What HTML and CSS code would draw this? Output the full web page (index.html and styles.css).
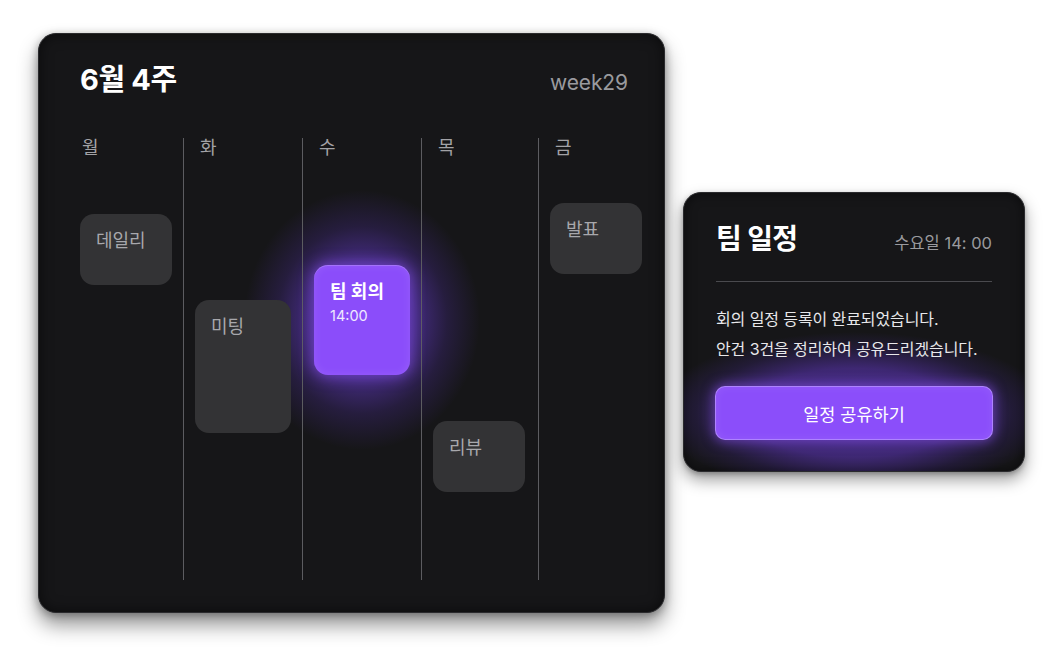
FILE: index.html
```html
<!DOCTYPE html>
<html lang="ko">
<head>
<meta charset="utf-8">
<title>주간 일정</title>
<link rel="stylesheet" href="styles.css">
</head>
<body>
<div class="stage">
  <section class="week-card">
    <header class="week-head">
      <h1 class="week-title">6월 4주</h1>
      <span class="week-no">week29</span>
    </header>
    <div class="days">
      <div class="day day-first">
        <span class="day-label">월</span>
        <div class="event ev-daily">데일리</div>
      </div>
      <div class="day">
        <span class="day-label">화</span>
        <div class="event ev-meeting">미팅</div>
      </div>
      <div class="day">
        <span class="day-label">수</span>
        <div class="event event-active ev-team">
          <span class="ev-name">팀 회의</span>
          <span class="ev-time">14:00</span>
        </div>
      </div>
      <div class="day">
        <span class="day-label">목</span>
        <div class="event ev-review">리뷰</div>
      </div>
      <div class="day">
        <span class="day-label">금</span>
        <div class="event ev-talk">발표</div>
      </div>
    </div>
  </section>

  <aside class="notice">
    <div class="notice-head">
      <h2 class="notice-title">팀 일정</h2>
      <span class="notice-when">수요일 14: 00</span>
    </div>
    <hr class="notice-rule">
    <p class="notice-text">회의 일정 등록이 완료되었습니다.<br>안건 3건을 정리하여 공유드리겠습니다.</p>
    <button class="notice-btn" type="button">일정 공유하기</button>
  </aside>
</div>
</body>
</html>
```

FILE: styles.css
```css
* { box-sizing: border-box; }

html, body {
  margin: 0;
  background: #ffffff;
}

body {
  font-family: "Inter", "Noto Sans CJK KR", sans-serif;
  color: #ffffff;
  min-height: 648px;
}

.stage {
  display: flex;
  align-items: flex-start;
  padding: 33px 0 40px 38px;
}

/* ---------- week card ---------- */
.week-card {
  position: relative;
  z-index: 0;
  width: 627px;
  height: 580px;
  background: #161618;
  border: 1px solid #2a2a2d;
  border-radius: 18px;
  box-shadow:
    inset 0 0 14px rgba(0, 0, 0, 0.55),
    0 12px 20px rgba(0, 0, 0, 0.42),
    0 2px 8px rgba(0, 0, 0, 0.3);
  padding: 26px 36px 0 41px;
  display: flex;
  flex-direction: column;
}

.week-head {
  display: flex;
  justify-content: space-between;
  align-items: baseline;
}

.week-title {
  margin: 0;
  font-size: 29px;
  font-weight: 700;
  letter-spacing: -0.4px;
  line-height: 40px;
}

.week-no {
  font-size: 21px;
  color: #9a9a9e;
  letter-spacing: -0.1px;
}

.days {
  margin-top: 38px;
  margin-right: -18px;
  display: grid;
  grid-template-columns: 103px 119px 119px 117px 1fr;
  height: 442px;
}

.day {
  display: flex;
  flex-direction: column;
  align-items: flex-start;
  border-left: 1px solid #5c5c60;
  padding-left: 11px;
}

.day-first {
  border-left: none;
  padding-left: 0;
}

.day-label {
  font-size: 18px;
  line-height: 20px;
  color: #a2a2a6;
  padding-left: 5px;
}

.day-first .day-label { padding-left: 2px; }

.event {
  width: 92px;
  height: 71px;
  border-radius: 14px;
  background: #333335;
  color: #a8a8ac;
  font-size: 18px;
  line-height: 24px;
  padding: 15px 16px 0;
}

.ev-daily  { margin-top: 56px; }
.ev-meeting { margin-top: 142px; width: 96px; height: 133px; }
.ev-team   { margin-top: 107px; width: 96px; height: 110px; }
.ev-review { margin-top: 263px; }
.ev-talk   { margin-top: 45px; }

.event-active {
  position: relative;
  background: #8b4dfa;
  color: #ffffff;
  display: flex;
  flex-direction: column;
  gap: 3px;
  box-shadow:
    inset 0 1px 0 rgba(255, 255, 255, 0.18),
    inset 0 0 10px rgba(255, 255, 255, 0.1),
    0 0 14px 2px rgba(145, 85, 255, 0.55);
}

/* soft purple halo behind the highlighted event */
.event-active::before {
  content: "";
  position: absolute;
  left: -70px;
  right: -70px;
  top: -75px;
  bottom: -75px;
  border-radius: 50%;
  background: radial-gradient(closest-side,
    rgba(130, 75, 255, 0.62) 0%,
    rgba(120, 68, 245, 0.45) 45%,
    rgba(110, 60, 235, 0.18) 72%,
    rgba(100, 55, 225, 0) 100%);
  z-index: -1;
}

.ev-name {
  font-weight: 700;
  font-size: 18px;
  line-height: 24px;
}

.ev-time {
  font-size: 14.5px;
  line-height: 18px;
  color: #efe8ff;
}

/* ---------- notice card ---------- */
.notice {
  position: relative;
  z-index: 0;
  overflow: hidden;
  margin: 159px 0 0 18px;
  width: 342px;
  height: 280px;
  background: #161618;
  border: 1px solid #2a2a2d;
  border-radius: 18px;
  box-shadow:
    inset 0 0 12px rgba(0, 0, 0, 0.55),
    0 8px 16px rgba(0, 0, 0, 0.38),
    0 2px 5px rgba(0, 0, 0, 0.25);
  padding: 26px 32px 0 32px;
  display: flex;
  flex-direction: column;
}

.notice-head {
  display: flex;
  justify-content: space-between;
  align-items: baseline;
}

.notice-title {
  margin: 0;
  font-size: 28px;
  font-weight: 700;
  letter-spacing: -0.6px;
  line-height: 40px;
}

.notice-when {
  font-size: 16.5px;
  color: #9a9a9e;
}

.notice-rule {
  margin: 22px 0 0;
  border: none;
  border-top: 1px solid #4a4a4e;
  height: 0;
}

.notice-text {
  margin: 22px 0 0;
  font-size: 16px;
  line-height: 30px;
  color: #e8e8ea;
  letter-spacing: -0.1px;
}

.notice-btn {
  position: relative;
  margin: 22px 0 0 -1px;
  width: 278px;
  height: 54px;
  border-radius: 10px;
  border: 1px solid rgba(185, 150, 255, 0.75);
  background: #8b4efa;
  color: #ffffff;
  font-family: "Inter", "Noto Sans CJK KR", sans-serif;
  font-size: 17.5px;
  box-shadow:
    inset 0 0 10px rgba(255, 255, 255, 0.08),
    0 0 12px 2px rgba(145, 85, 255, 0.5);
}

.notice-btn::before {
  content: "";
  position: absolute;
  left: -60px;
  right: -60px;
  top: -55px;
  bottom: -55px;
  border-radius: 50%;
  background: radial-gradient(closest-side,
    rgba(125, 70, 250, 0.55) 0%,
    rgba(118, 65, 240, 0.42) 55%,
    rgba(105, 58, 230, 0.15) 80%,
    rgba(100, 55, 225, 0) 100%);
  z-index: -1;
}
```
